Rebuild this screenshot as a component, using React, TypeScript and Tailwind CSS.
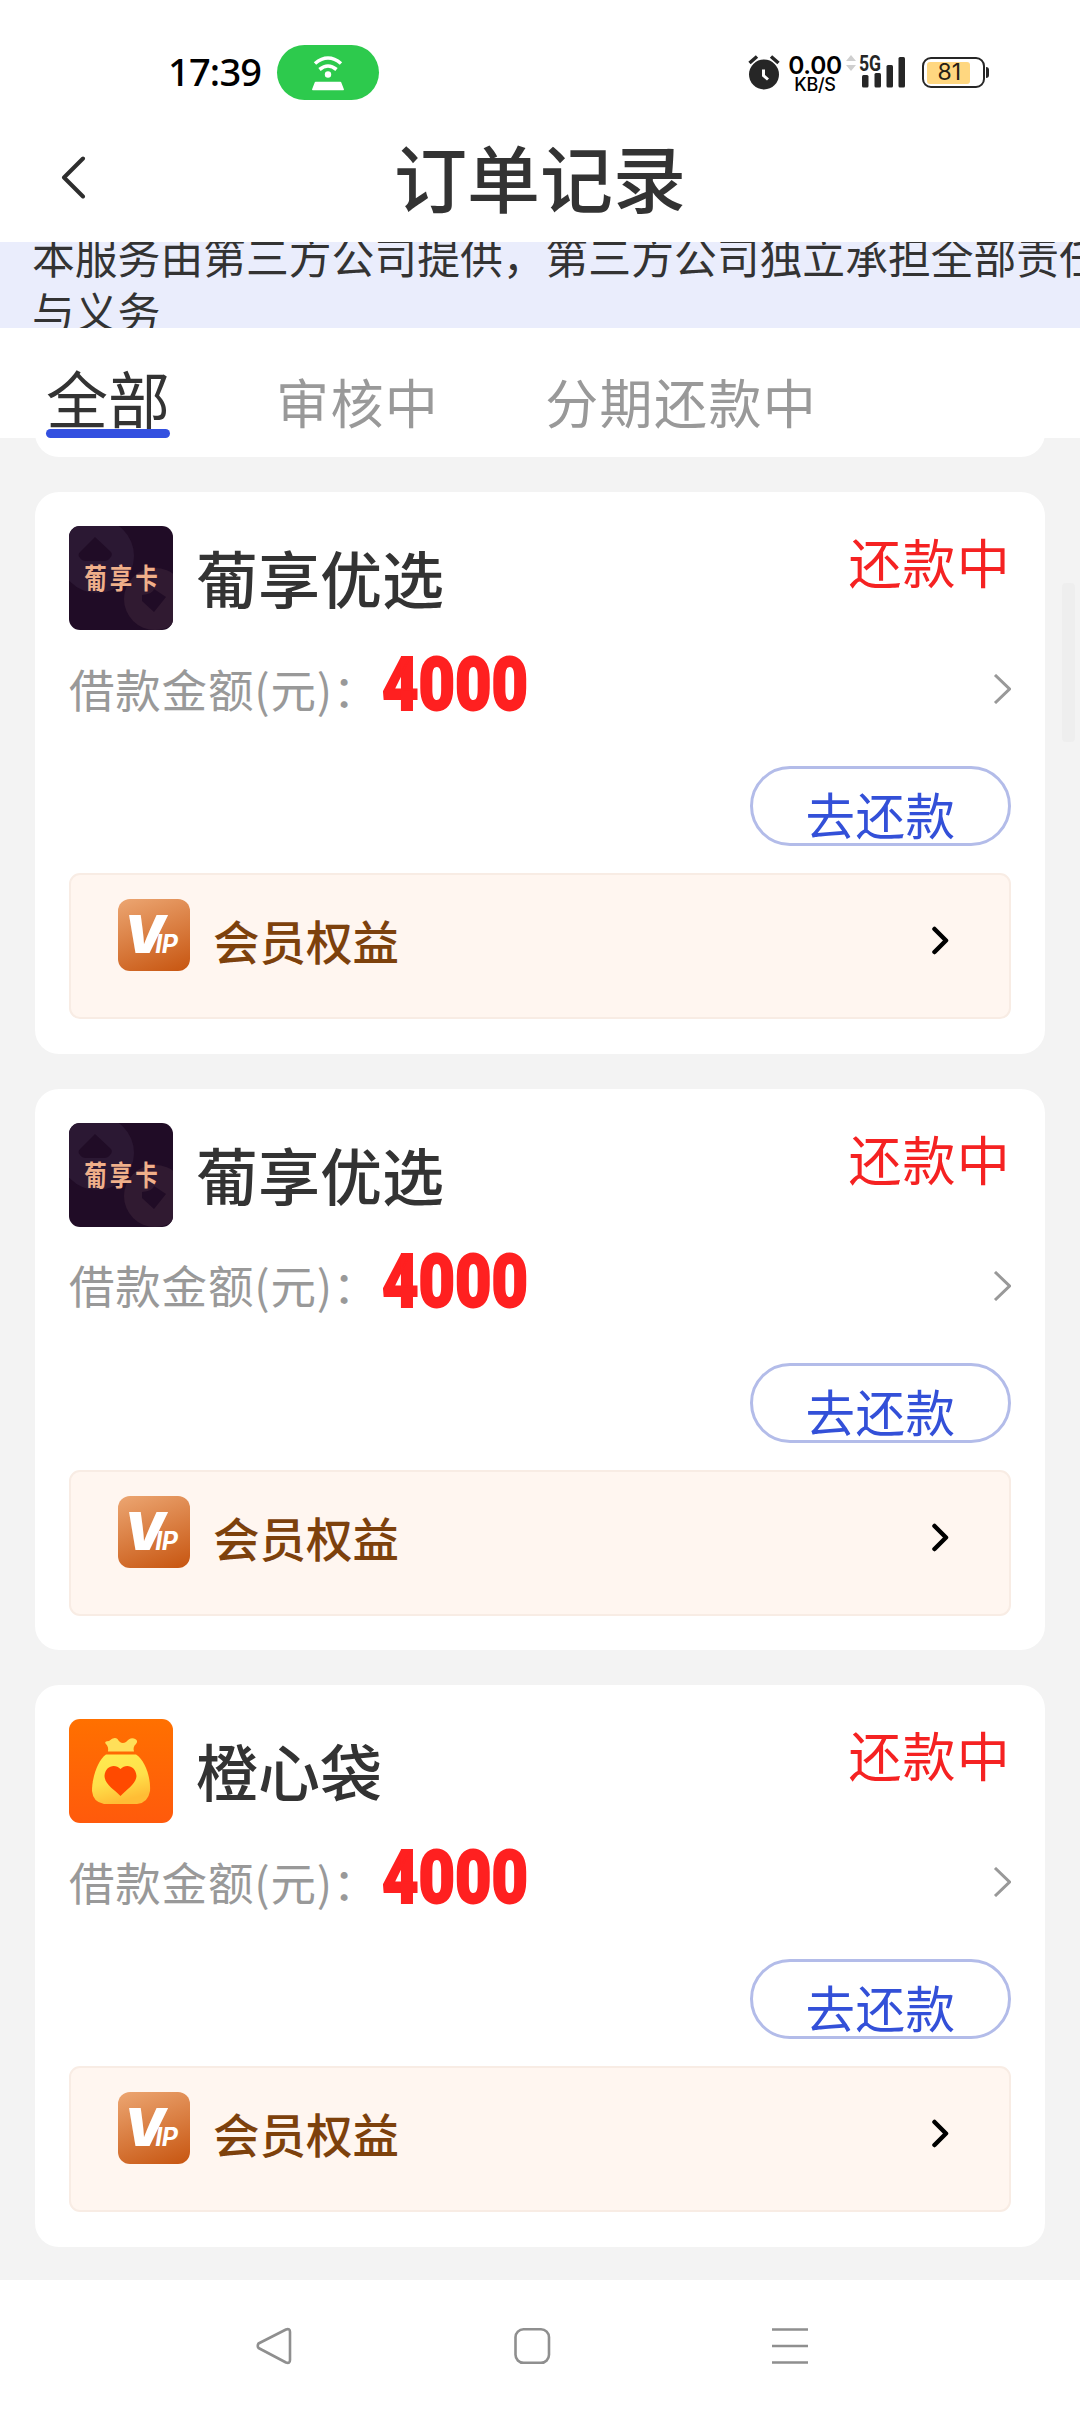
type Order = {
  name: string;
  logo: "card" | "bag";
  amount: string;
};

const orders: Order[] = [
  { name: "葡享优选", logo: "card", amount: "4000" },
  { name: "葡享优选", logo: "card", amount: "4000" },
  { name: "橙心袋", logo: "bag", amount: "4000" },
];

const tabs = ["全部", "审核中", "分期还款中"];

function StatusBar() {
  return (
    <div className="flex h-[142px] shrink-0 pl-[168px]">
      <span className="mt-[44px] w-[109px] font-['Noto_Sans',sans-serif] text-[38px]/[55px] font-medium tracking-[-0.8px] text-black">
        17:39
      </span>
      <div className="mt-[45px] flex h-[55px] w-[102px] items-center justify-center rounded-full bg-[#2dca4d]">
        <svg width="34" height="38" viewBox="0 0 34 38" fill="none" stroke="#fff" strokeWidth="3.600">
          <path d="M4 9.500Q17-1.500 30 9.500" />
          <path d="M8.500 15.500Q17 8.500 25.500 15.500" />
          <circle cx="17" cy="20.500" r="3.200" fill="#fff" stroke="none" />
          <path d="M4.500 28.500h25l2.700 7H1.800z" fill="#fff" stroke="#fff" strokeWidth="1.500" strokeLinejoin="round" />
        </svg>
      </div>
      <div className="ml-[369px] mt-[54px] flex items-start">
        <svg width="32" height="36" viewBox="0 0 32 36" fill="none">
          <circle cx="16" cy="20.500" r="15" fill="#262626" />
          <path d="M1.500 9 9 2.500M30.500 9 23 2.500" stroke="#262626" strokeWidth="3.500" />
          <path d="M15.500 15.500v6l4.500 4" stroke="#fff" strokeWidth="3" />
        </svg>
        <div className="ml-2 flex w-[54px] flex-col items-center font-['Inter',sans-serif] text-black">
          <span className="text-[24.5px]/[22px] font-semibold tracking-[-0.3px]">0.00</span>
          <span className="text-[18px]/[18px] font-medium tracking-[-0.3px]">KB/S</span>
        </div>
        <svg className="ml-[3px]" width="12" height="18" viewBox="0 0 12 18" fill="#cfcfcf">
          <path d="M6 1l5 6H1zM6 17l5-6H1z" />
        </svg>
        <div className="ml-0.5 flex w-[51px] flex-col">
          <span className="h-[18px] origin-left scale-x-[.8] font-['Roboto',sans-serif] text-[22px]/[19px] font-bold text-[#262626]">5G</span>
          <svg className="-mt-[16px] ml-[3px]" width="44" height="32" viewBox="0 0 44 32" fill="#262626">
            <rect x="0" y="19" width="6.500" height="12.500" rx="1.500" />
            <rect x="12.500" y="17" width="6.500" height="14.500" rx="1.500" />
            <rect x="24.500" y="9" width="6.500" height="22.500" rx="1.500" />
            <rect x="36.500" y="1" width="6.500" height="30.500" rx="1.500" />
          </svg>
        </div>
        <div className="ml-[12px] mt-[3px] flex items-center gap-px">
          <div className="flex h-[31px] w-[63px] rounded-[9px] border-[2.500px] border-[#262626] p-[2.500px]">
            <div className="w-[43px] rounded-[3px] bg-[#ffd780] pl-[11px] font-['Inter',sans-serif] text-[23px]/[21px] text-[#262015]">
              81
            </div>
          </div>
          <div className="h-[11px] w-[3px] rounded-r bg-[#262626]" />
        </div>
      </div>
    </div>
  );
}

function CardLogo() {
  return (
    <div className="relative flex size-[104px] items-center justify-center overflow-hidden rounded-[11px] bg-[#200c26]">
      <svg className="absolute inset-0" width="104" height="104" viewBox="0 0 104 104">
        <circle cx="28" cy="30" r="37" fill="#2b1833" />
        <path d="m26 11 16 15q2 3-1 6-2 3-6 3H17q-4 0-6-3-3-3 0-6z" fill="#200c26" />
        <circle cx="86" cy="73" r="31" fill="#301a31" />
        <path d="m73 69q11-1 12-6l12 8-12 15-12-11z" fill="#200c26" />
      </svg>
      <span className="relative -mt-1 ml-[3px] scale-y-[1.250] whitespace-nowrap text-[22.5px]/[30px] font-bold tracking-[3px] text-[#f0b08a]">
        葡享卡
      </span>
    </div>
  );
}

function BagLogo() {
  return (
    <svg className="size-[104px] rounded-[11px]" viewBox="0 0 104 104">
      <defs>
        <linearGradient id="bag-bg" x1="0" y1="0" x2="0" y2="1">
          <stop stopColor="#ff7000" />
          <stop offset="1" stopColor="#ff5a0c" />
        </linearGradient>
        <linearGradient id="bag-body" x1="0" y1="0" x2="0.3" y2="1">
          <stop stopColor="#ffec50" />
          <stop offset=".6" stopColor="#ffe04a" />
          <stop offset="1" stopColor="#ffbd35" />
        </linearGradient>
      </defs>
      <rect width="104" height="104" fill="url(#bag-bg)" />
      <path
        d="M39 32.500Q40 28 36.500 24.500 35 22 40 22 45 17.500 48.500 20 52 26 57 23 61 18 65 19.500 70 21 67 25 63.500 28 65 32.500z"
        fill="#ffdf59"
      />
      <path d="M37 35.500H67C76 41 82 59 81 72Q79 84 68 85H35Q24 83 23 72C23 58 29 41 37 35.500z" fill="url(#bag-body)" />
      <path d="M51.500 77C45 70 36 66 35.500 57 36 47 46 44 51.500 50 57 44 67 47 67.500 57 67 65 58 70 51.500 77z" fill="#ff4a00" />
    </svg>
  );
}

function VipBadge() {
  return (
    <div className="flex size-[72px] rounded-[12px] bg-linear-[160deg] from-[#eca672] to-[#c75510] pl-[6px] pt-[5px] font-['Inter',sans-serif] font-black italic text-white">
      <span className="whitespace-nowrap text-[52px]/[62px]">
        V<span className="-ml-[10px] text-[25px] font-bold tracking-[-0.5px]">IP</span>
      </span>
    </div>
  );
}

function OrderCard({ order }: { order: Order }) {
  return (
    <article className="flex h-[561.5px] shrink-0 flex-col rounded-[24px] bg-white px-[34px] pt-[34px]">
      <div className="flex h-[104px]">
        {order.logo === "card" ? <CardLogo /> : <BagLogo />}
        <h2 className="ml-[23px] mt-[6px] text-[62px]/[90px] font-medium text-[#333]">{order.name}</h2>
        <span className="ml-auto text-[53px]/[70px] tracking-[1.2px] text-[#f52222]">还款中</span>
      </div>
      <div className="mt-3 flex h-[92px] items-center justify-between">
        <div className="flex items-center">
          <span className="w-[313px] whitespace-nowrap text-[45.5px] tracking-[0.8px] text-[#999]">借款金额(元)：</span>
          <span className="-mt-2 origin-left scale-x-[.84] font-['Roboto',sans-serif] text-[75px]/[76px] font-black text-[#ff2020] [-webkit-text-stroke:2px_#ff2020]">
            {order.amount}
          </span>
        </div>
        <svg className="mt-0.5" width="18" height="30" viewBox="0 0 18 30" fill="none" stroke="#999" strokeWidth="3">
          <path d="m2 1 14.500 14L2 29" />
        </svg>
      </div>
      <button
        type="button"
        className="mt-[32px] h-20 w-[261px] shrink-0 self-end rounded-full border-[3px] border-[#b3bce9] text-[49.5px]/[72px] tracking-[0.5px] text-[#3350d8]"
      >
        <span className="block pt-[9px]">去还款</span>
      </button>
      <div className="mt-[27px] flex h-[146px] rounded-[11px] border-2 border-[#f8ece4] bg-[#fff6f0] pl-[47px] pr-[60px] pt-6">
        <VipBadge />
        <span className="ml-[23px] mt-[7px] text-[46.5px]/[68px] font-medium text-[#7d410c]">会员权益</span>
        <svg
          className="ml-auto mt-[27px]"
          width="18"
          height="29"
          viewBox="0 0 18 29"
          fill="none"
          stroke="#000"
          strokeWidth="4.500"
          strokeLinecap="round"
          strokeLinejoin="round"
        >
          <path d="m3.500 3 11.500 11.500L3.500 26" />
        </svg>
      </div>
    </article>
  );
}

export default function App() {
  return (
    <div className="flex h-[2412px] w-[1080px] flex-col overflow-hidden bg-white font-['Noto_Sans_CJK_SC',sans-serif]">
      <StatusBar />
      <header className="flex h-[100px] shrink-0 items-start px-[60px] pt-[9px]">
        <svg className="mt-[4px]" width="26" height="44" viewBox="0 0 26 44" fill="none" stroke="#2e2e2e" strokeWidth="4" strokeLinecap="round" strokeLinejoin="round">
          <path d="M23 3.500 4 22.500 23 41.500" />
        </svg>
        <h1 className="-mt-[16px] mr-[26px] flex-1 text-center text-[73px]/[80px] font-medium text-[#333]">订单记录</h1>
      </header>
      <div className="h-[86px] shrink-0 overflow-hidden bg-[#eaedfc] pl-8">
        <p className="-mt-[14px] whitespace-nowrap text-[42.8px]/[55px] text-[#333]">
          本服务由第三方公司提供，第三方公司独立承担全部责任
          <br />
          与义务
        </p>
      </div>
      <nav className="relative z-10 flex h-[110px] shrink-0 items-end gap-[106px] bg-white pl-[46px]">
        {tabs.map((tab, index) => (
          <button
            key={tab}
            type="button"
            className={
              index === 0
                ? "relative pb-[5px] text-[62px]/[72px] text-[#333] after:absolute after:inset-x-0 after:bottom-0 after:h-[9px] after:rounded-full after:bg-[#3350e0]"
                : "pb-[1px] text-[53px]/[72px] tracking-[1.4px] text-[#999]"
            }
          >
            {tab}
          </button>
        ))}
      </nav>
      <main className="relative flex h-[1842px] shrink-0 flex-col gap-[35px] overflow-hidden bg-[#f3f3f3] px-[35px]">
        <div className="h-[19px] shrink-0 overflow-hidden">
          <div className="-mt-10 h-[59px] rounded-b-[24px] bg-white" />
        </div>
        {orders.map((order, index) => (
          <OrderCard key={index} order={order} />
        ))}
        <div className="absolute right-[5px] top-[145px] h-[159px] w-[13px] rounded-sm bg-[#eeeeee]" />
      </main>
      <footer className="flex flex-1 items-center pl-[256px]">
        <svg width="554" height="40" viewBox="0 0 554 40" fill="none" stroke="#8f8f8f" strokeWidth="2.600" strokeLinejoin="round">
          <path d="M2.500 17.500Q1 20 2.500 22L30 36.500Q34 38 34 34V6Q34 2 30 3.500z" />
          <rect x="259.500" y="3.300" width="33.500" height="33.500" rx="8" />
          <path d="M516 3.500h36M516 20h36M516 36.500h36" />
        </svg>
      </footer>
    </div>
  );
}
